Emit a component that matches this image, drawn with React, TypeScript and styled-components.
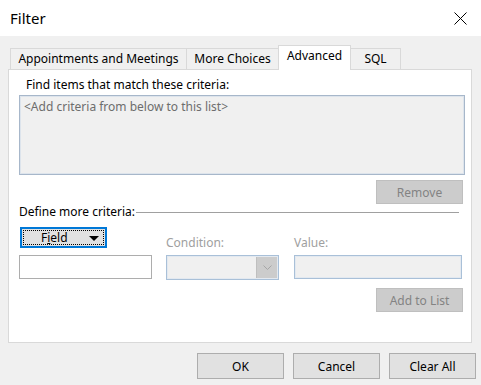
import React from "react";
import styled, { createGlobalStyle } from "styled-components";

const GlobalStyle = createGlobalStyle`
  html, body {
    margin: 0;
    padding: 0;
    background: #f0f0f0;
  }
  body {
    font-family: "Segoe UI", "Noto Sans", sans-serif;
    font-size: 12px;
    color: #000;
  }
`;

const Window = styled.div`
  width: 481px;
  height: 385px;
  display: flex;
  flex-direction: column;
  background: #f0f0f0;
  overflow: hidden;
`;

const TitleBar = styled.div`
  height: 36px;
  flex: none;
  background: #fff;
  display: flex;
  align-items: center;
  justify-content: space-between;
  padding: 0 14px 0 10px;
`;

const Title = styled.span`
  font-size: 15px;
  line-height: 20px;
`;

const Body = styled.div`
  flex: 1;
  display: flex;
  flex-direction: column;
  padding: 9px 9px 0 8px;
  border-left: 1px solid #d4d4d4;
  margin-left: -1px;
`;

const TabRow = styled.div`
  display: flex;
  align-items: flex-end;
  padding-left: 2px;
  height: 24px;
`;

const Tab = styled.div<{ $active?: boolean; $w: number }>`
  box-sizing: border-box;
  width: ${(p) => p.$w}px;
  height: ${(p) => (p.$active ? 25 : 21)}px;
  margin-left: -1px;
  margin-bottom: ${(p) => (p.$active ? -1 : 0)}px;
  border: 1px solid #d9d9d9;
  border-bottom: none;
  background: ${(p) => (p.$active ? "#fff" : "#f0f0f0")};
  position: relative;
  z-index: ${(p) => (p.$active ? 2 : 1)};
  display: flex;
  justify-content: center;
  padding-top: 2px;
  line-height: 16px;
  white-space: nowrap;
  &:first-child {
    margin-left: 0;
  }
`;

const Panel = styled.div`
  box-sizing: border-box;
  height: 274px;
  border: 1px solid #d9d9d9;
  background: #fff;
  padding: 7px 7px 0 10px;
  display: flex;
  flex-direction: column;
`;

const Label = styled.div<{ $indent?: number; $disabled?: boolean }>`
  line-height: 16px;
  margin-left: ${(p) => p.$indent ?? 0}px;
  color: ${(p) => (p.$disabled ? "#a0a0a0" : "#000")};
  white-space: nowrap;
`;

const CriteriaList = styled.div`
  box-sizing: border-box;
  margin-top: 2px;
  height: 80px;
  width: 446px;
  border: 1px solid #a7b7ca;
  box-shadow: inset 0 0 0 1px #dde4ec;
  background: #f0f0f0;
  color: #6d6d6d;
  padding: 3px 4px;
  line-height: 16px;
`;

const SideButton = styled.button<{ $top: number }>`
  box-sizing: border-box;
  align-self: flex-end;
  margin: ${(p) => p.$top}px 1px 0 0;
  width: 87px;
  height: 24px;
  border: 1px solid #bfbfbf;
  background: #cccccc;
  color: #838383;
  font: inherit;
  padding: 0;
`;

const SectionHead = styled.div`
  display: flex;
  align-items: center;
  margin-right: 5px;
  &::after {
    content: "";
    flex: 1;
    height: 1px;
    background: #a0a0a0;
    margin-left: 1px;
  }
`;

const CriteriaGrid = styled.div`
  display: grid;
  grid-template-columns: 133px 115px 171px;
  column-gap: 12px;
  grid-template-rows: 35px 24px;
  & > :nth-child(3n + 2) {
    margin-left: 2px;
  }
  & > :nth-child(3n) {
    margin-left: 3px;
  }
`;

const FieldButton = styled.div`
  box-sizing: border-box;
  margin: 7px 0 0 1px;
  width: 87px;
  height: 21px;
  border: 2px solid #0078d7;
  background: #e1e1e1;
  padding: 1px;
`;

const FocusRing = styled.div`
  box-sizing: border-box;
  height: 100%;
  border: 1px dotted #000;
  display: flex;
  align-items: center;
  padding: 0 4px 0 17px;
  line-height: 14px;
`;

const Accel = styled.span`
  text-decoration: underline;
`;

const Arrow = styled.span`
  margin-left: auto;
  margin-top: 1px;
  width: 0;
  height: 0;
  border-left: 5px solid transparent;
  border-right: 5px solid transparent;
  border-top: 5px solid #000;
`;

const ColLabel = styled(Label)`
  align-self: end;
  margin-bottom: 4px;
`;

const Input = styled.div<{ $disabled?: boolean }>`
  box-sizing: border-box;
  height: 24px;
  border: 1px solid ${(p) => (p.$disabled ? "#a9c0d8" : "#adadad")};
  box-shadow: ${(p) => (p.$disabled ? "inset 0 0 0 1px #e3e9f0" : "none")};
  background: ${(p) => (p.$disabled ? "#f0f0f0" : "#fff")};
`;

const Select = styled(Input)`
  height: 25px;
  display: flex;
  justify-content: flex-end;
  padding: 1px;
`;

const DropButton = styled.div`
  width: 20px;
  background: #cccccc;
  border-left: 1px solid #bfbfbf;
  display: flex;
  align-items: center;
  justify-content: center;
`;

const Footer = styled.div`
  display: flex;
  justify-content: flex-end;
  gap: 9px;
  padding: 10px 5px 0 0;
  margin-right: -9px;
`;

const DialogButton = styled.button`
  box-sizing: border-box;
  width: 87px;
  height: 26px;
  border: 1px solid #adadad;
  background: #e1e1e1;
  font: inherit;
  color: #000;
  padding: 0;
`;

export default function App() {
  return (
    <Window>
      <GlobalStyle />
      <TitleBar>
        <Title>Filter</Title>
        <svg width="13" height="13" viewBox="0 0 13 13">
          <path d="M0.5 0.5L12.5 12.5M12.5 0.5L0.5 12.5" stroke="#000" strokeWidth="1" />
        </svg>
      </TitleBar>
      <Body>
        <TabRow>
          <Tab $w={177}>Appointments and Meetings</Tab>
          <Tab $w={93}>More Choices</Tab>
          <Tab $w={73} $active>
            Advanced
          </Tab>
          <Tab $w={51}>SQL</Tab>
        </TabRow>
        <Panel>
          <Label $indent={7}>Find items that match these criteria:</Label>
          <CriteriaList>&lt;Add criteria from below to this list&gt;</CriteriaList>
          <SideButton $top={5}>Remove</SideButton>
          <SectionHead>
            <Label>Define more criteria:</Label>
          </SectionHead>
          <CriteriaGrid>
            <FieldButton>
              <FocusRing>
                <span>
                  F<Accel>i</Accel>eld
                </span>
                <Arrow />
              </FocusRing>
            </FieldButton>
            <ColLabel $disabled>Condition:</ColLabel>
            <ColLabel $disabled>Value:</ColLabel>
            <Input />
            <Select $disabled>
              <DropButton>
                <svg width="9" height="5" viewBox="0 0 9 5">
                  <path d="M0.5 0.5L4.5 4.5L8.5 0.5" stroke="#a6a6a6" fill="none" />
                </svg>
              </DropButton>
            </Select>
            <Input $disabled />
          </CriteriaGrid>
          <SideButton $top={9}>Add to List</SideButton>
        </Panel>
        <Footer>
          <DialogButton>OK</DialogButton>
          <DialogButton>Cancel</DialogButton>
          <DialogButton>Clear All</DialogButton>
        </Footer>
      </Body>
    </Window>
  );
}
